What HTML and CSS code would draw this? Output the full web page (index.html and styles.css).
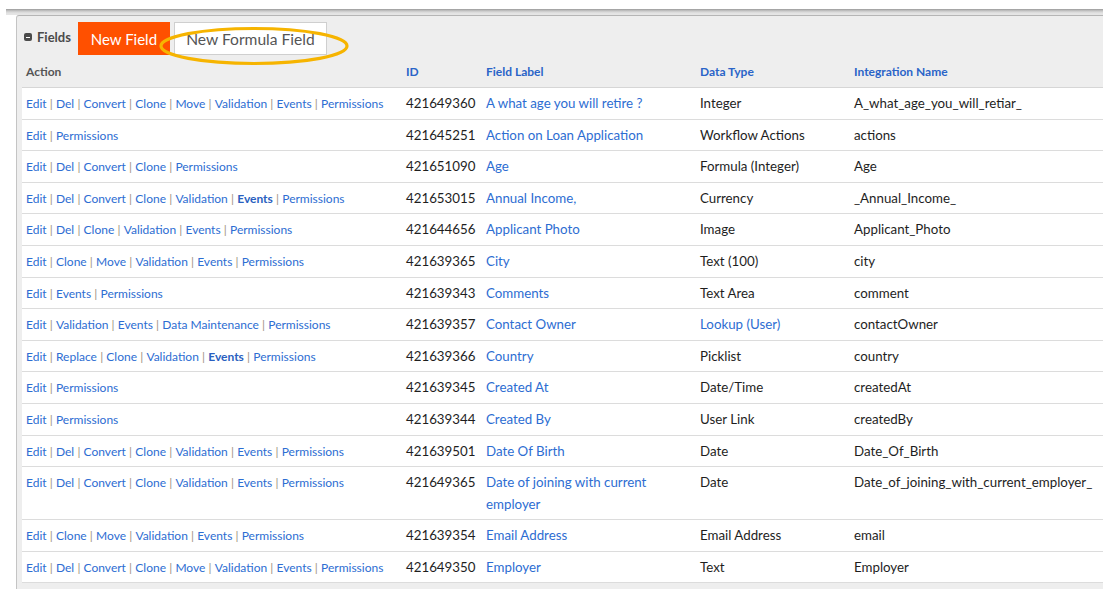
FILE: index.html
```html
<!DOCTYPE html>
<html>
<head>
<meta charset="utf-8">
<link rel="stylesheet" href="styles.css">
</head>
<body>
<div class="frame">
  <div class="band"></div>
  <div class="panel">
    <div class="toolbar">
      <span class="title"><span class="minus"></span>Fields</span>
      <span class="btn btn-primary">New Field</span>
      <span class="btn btn-plain">New Formula Field</span>
      <svg class="ring" width="194" height="42" viewBox="0 0 194 42"><ellipse cx="97" cy="21" rx="93" ry="17.5" fill="none" stroke="#f6b400" stroke-width="3.2"/></svg>
    </div>
    <table class="grid">
      <colgroup>
        <col class="c1"><col class="c2"><col class="c3"><col class="c4"><col class="c5">
      </colgroup>
      <thead>
        <tr><th class="muted">Action</th><th>ID</th><th>Field Label</th><th>Data Type</th><th>Integration Name</th></tr>
      </thead>
      <tbody>
        <tr><td class="acts"><a>Edit</a><i>|</i><a>Del</a><i>|</i><a>Convert</a><i>|</i><a>Clone</a><i>|</i><a>Move</a><i>|</i><a>Validation</a><i>|</i><a>Events</a><i>|</i><a>Permissions</a></td><td>421649360</td><td><a>A what age you will retire ?</a></td><td>Integer</td><td>A_what_age_you_will_retiar_</td></tr>
        <tr><td class="acts"><a>Edit</a><i>|</i><a>Permissions</a></td><td>421645251</td><td><a>Action on Loan Application</a></td><td>Workflow Actions</td><td>actions</td></tr>
        <tr><td class="acts"><a>Edit</a><i>|</i><a>Del</a><i>|</i><a>Convert</a><i>|</i><a>Clone</a><i>|</i><a>Permissions</a></td><td>421651090</td><td><a>Age</a></td><td>Formula (Integer)</td><td>Age</td></tr>
        <tr><td class="acts"><a>Edit</a><i>|</i><a>Del</a><i>|</i><a>Convert</a><i>|</i><a>Clone</a><i>|</i><a>Validation</a><i>|</i><a class="b">Events</a><i>|</i><a>Permissions</a></td><td>421653015</td><td><a>Annual Income,</a></td><td>Currency</td><td>_Annual_Income_</td></tr>
        <tr><td class="acts"><a>Edit</a><i>|</i><a>Del</a><i>|</i><a>Clone</a><i>|</i><a>Validation</a><i>|</i><a>Events</a><i>|</i><a>Permissions</a></td><td>421644656</td><td><a>Applicant Photo</a></td><td>Image</td><td>Applicant_Photo</td></tr>
        <tr><td class="acts"><a>Edit</a><i>|</i><a>Clone</a><i>|</i><a>Move</a><i>|</i><a>Validation</a><i>|</i><a>Events</a><i>|</i><a>Permissions</a></td><td>421639365</td><td><a>City</a></td><td>Text (100)</td><td>city</td></tr>
        <tr><td class="acts"><a>Edit</a><i>|</i><a>Events</a><i>|</i><a>Permissions</a></td><td>421639343</td><td><a>Comments</a></td><td>Text Area</td><td>comment</td></tr>
        <tr><td class="acts"><a>Edit</a><i>|</i><a>Validation</a><i>|</i><a>Events</a><i>|</i><a>Data Maintenance</a><i>|</i><a>Permissions</a></td><td>421639357</td><td><a>Contact Owner</a></td><td><a>Lookup (User)</a></td><td>contactOwner</td></tr>
        <tr><td class="acts"><a>Edit</a><i>|</i><a>Replace</a><i>|</i><a>Clone</a><i>|</i><a>Validation</a><i>|</i><a class="b">Events</a><i>|</i><a>Permissions</a></td><td>421639366</td><td><a>Country</a></td><td>Picklist</td><td>country</td></tr>
        <tr><td class="acts"><a>Edit</a><i>|</i><a>Permissions</a></td><td>421639345</td><td><a>Created At</a></td><td>Date/Time</td><td>createdAt</td></tr>
        <tr><td class="acts"><a>Edit</a><i>|</i><a>Permissions</a></td><td>421639344</td><td><a>Created By</a></td><td>User Link</td><td>createdBy</td></tr>
        <tr><td class="acts"><a>Edit</a><i>|</i><a>Del</a><i>|</i><a>Convert</a><i>|</i><a>Clone</a><i>|</i><a>Validation</a><i>|</i><a>Events</a><i>|</i><a>Permissions</a></td><td>421639501</td><td><a>Date Of Birth</a></td><td>Date</td><td>Date_Of_Birth</td></tr>
        <tr><td class="acts"><a>Edit</a><i>|</i><a>Del</a><i>|</i><a>Convert</a><i>|</i><a>Clone</a><i>|</i><a>Validation</a><i>|</i><a>Events</a><i>|</i><a>Permissions</a></td><td>421649365</td><td><a>Date of joining with current employer</a></td><td>Date</td><td>Date_of_joining_with_current_employer_</td></tr>
        <tr><td class="acts"><a>Edit</a><i>|</i><a>Clone</a><i>|</i><a>Move</a><i>|</i><a>Validation</a><i>|</i><a>Events</a><i>|</i><a>Permissions</a></td><td>421639354</td><td><a>Email Address</a></td><td>Email Address</td><td>email</td></tr>
        <tr><td class="acts"><a>Edit</a><i>|</i><a>Del</a><i>|</i><a>Convert</a><i>|</i><a>Clone</a><i>|</i><a>Move</a><i>|</i><a>Validation</a><i>|</i><a>Events</a><i>|</i><a>Permissions</a></td><td>421649350</td><td><a>Employer</a></td><td>Text</td><td>Employer</td></tr>
      </tbody>
    </table>
  </div>
</div>
</body>
</html>
```

FILE: styles.css
```css
html, body {
  margin: 0;
  padding: 0;
  background: #ffffff;
  font-family: Lato, "Open Sans", Arial, sans-serif;
  color: #222;
  overflow: hidden;
}
.frame {
  margin: 9px 0 0 6px;
  width: 1097px;
}
.band {
  height: 6px;
  background: linear-gradient(to bottom, #9a9a9a 0, #c8c8c8 2px, #e2e2e2 4px, #e6e6e6 6px);
}
.panel {
  margin-left: 10px;
  background: #eeeeee;
  border-top: 1px solid #b5b5b5;
  border-left: 1px solid #c4c4c4;
  border-top-left-radius: 3px;
  padding-left: 5px;
  height: 600px;
}
.toolbar {
  position: relative;
  display: flex;
  align-items: center;
  padding-top: 6px;
  height: 33px;
}
.title {
  display: flex;
  align-items: center;
  font-size: 13px;
  font-weight: 700;
  color: #4a4a4a;
  margin-left: 2px;
  margin-top: -3px;
}
.minus {
  width: 8px;
  height: 8px;
  border-radius: 2px;
  background: #4b4b4b;
  margin-right: 5px;
  position: relative;
}
.minus::after {
  content: "";
  position: absolute;
  left: 2px;
  right: 2px;
  top: 3.5px;
  height: 1px;
  background: #fff;
}
.btn {
  height: 33px;
  box-sizing: border-box;
  display: flex;
  align-items: center;
  justify-content: center;
  font-size: 15px;
}
.btn-primary {
  margin-left: 7px;
  width: 92px;
  background: #ff5000;
  color: #fff;
}
.btn-plain {
  margin-left: 4px;
  width: 153px;
  background: #fff;
  border: 1px solid #cfcfcf;
  color: #555;
  padding-top: 1px;
  font-size: 15.6px;
}
.ring {
  position: absolute;
  left: 135px;
  top: 9px;
}
.grid {
  width: 1081px;
  border-collapse: collapse;
  table-layout: fixed;
}
.c1 { width: 380px; }
.c2 { width: 80px; }
.c3 { width: 214px; }
.c4 { width: 154px; }
.c5 { width: 253px; }
th {
  text-align: left;
  font-size: 12px;
  font-weight: 700;
  color: #2a64c8;
  padding: 6px 4px 5px;
  line-height: 21px;
  border-bottom: 1px solid #d6d6d6;
}
th.muted { color: #555; }
tbody tr { background: #fff; }
td {
  vertical-align: top;
  font-size: 13.3px;
  line-height: 21.4px;
  padding: 5px 4px 4.2px;
  border-bottom: 1px solid #dcdcdc;
  color: #1e1e1e;
}
td a { color: #2d6dd2; }
td.acts {
  font-size: 12px;
  white-space: nowrap;
}
td.acts i {
  font-style: normal;
  color: #a0927f;
  margin: 0 3.2px;
}
td.acts a.b { font-weight: 700; color: #2a5fc0; }
```
